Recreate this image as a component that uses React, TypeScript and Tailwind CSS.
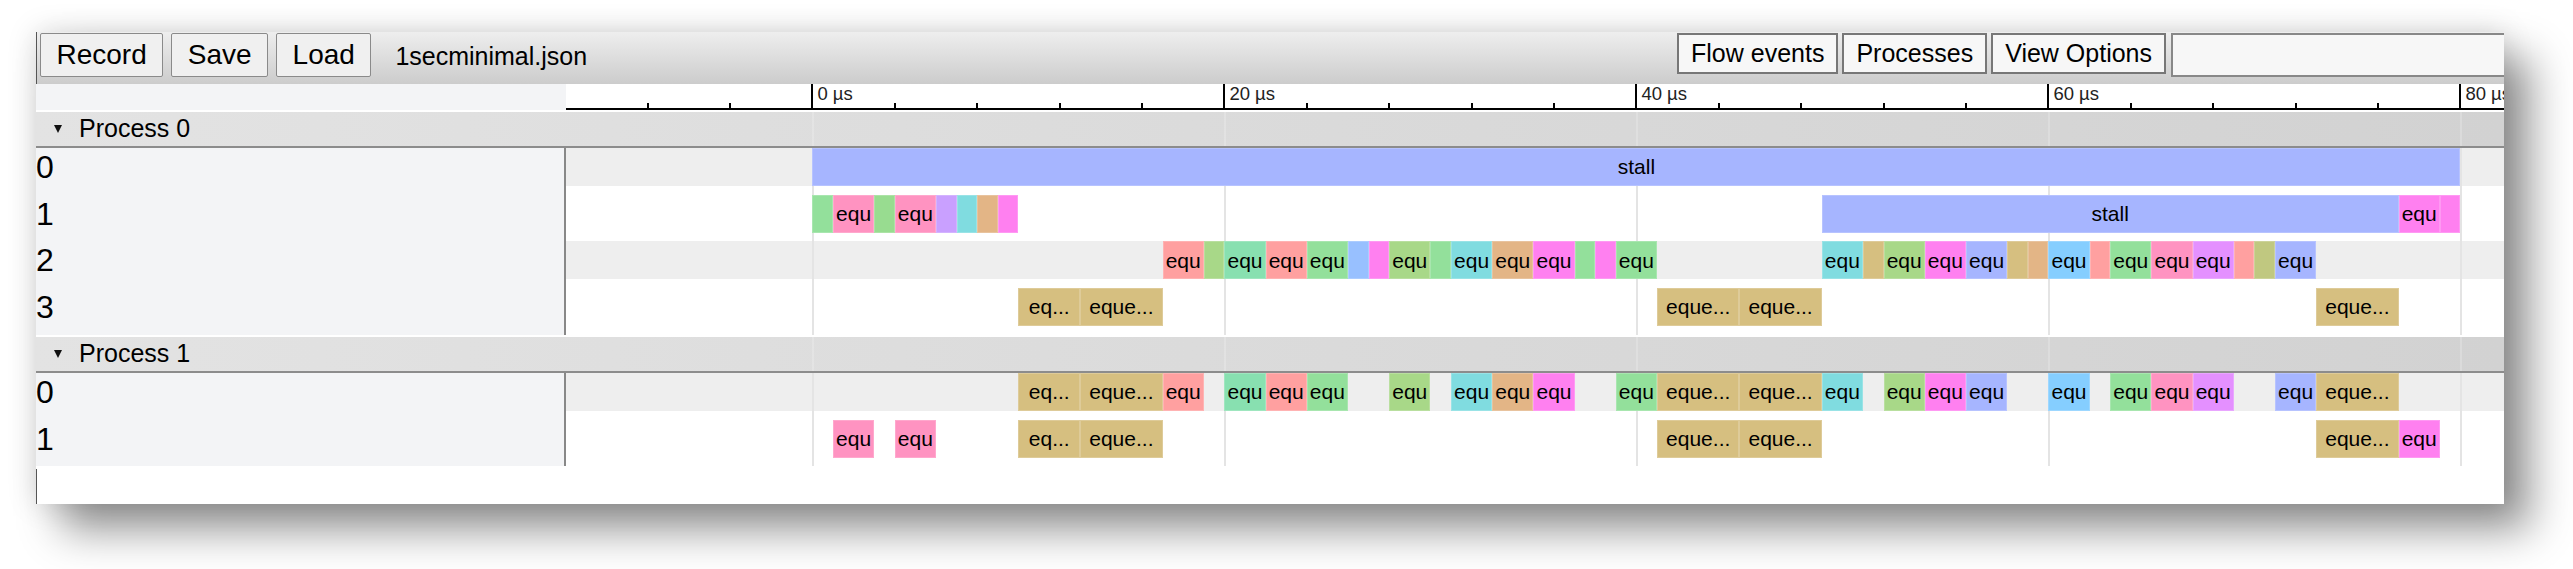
const PX_PER_US = 20.6;
const ZERO_X = 246.4;
const LABEL_W = 530;

const c = {
  green: "bg-[#93e09b]",
  leaf: "bg-[#98dc90]",
  lime: "bg-[#a8d888]",
  sea: "bg-[#88e0b0]",
  pink: "bg-[#ff93c1]",
  purple: "bg-[#c9a0ff]",
  violet: "bg-[#e490ff]",
  teal: "bg-[#80dce0]",
  tan: "bg-[#e3b586]",
  gold: "bg-[#d6bf80]",
  magenta: "bg-[#ff80f0]",
  salmon: "bg-[#ffa0a0]",
  blue: "bg-[#98c0ff]",
  sky: "bg-[#85ceff]",
  peri: "bg-[#a6b5ff]",
  olive: "bg-[#c0c880]",
};

type Ev = [number, number, string, string?];

const eq3: Ev = [10, 13, c.gold, "eq..."];
const eq4: Ev = [13, 17, c.gold, "eque..."];
const eq41: Ev = [41, 45, c.gold, "eque..."];
const eq45: Ev = [45, 49, c.gold, "eque..."];
const eq73: Ev = [73, 77, c.gold, "eque..."];

const process0: Ev[][] = [
  [[0, 80, c.peri, "stall"]],
  [
    [0, 1, c.green],
    [1, 3, c.pink, "equ"],
    [3, 4, c.leaf],
    [4, 6, c.pink, "equ"],
    [6, 7, c.purple],
    [7, 8, c.teal],
    [8, 9, c.tan],
    [9, 10, c.magenta],
    [49, 77, c.peri, "stall"],
    [77, 79, c.magenta, "equ"],
    [79, 80, c.magenta],
  ],
  [
    [17, 19, c.salmon, "equ"],
    [19, 20, c.lime],
    [20, 22, c.sea, "equ"],
    [22, 24, c.salmon, "equ"],
    [24, 26, c.green, "equ"],
    [26, 27, c.blue],
    [27, 28, c.magenta],
    [28, 30, c.lime, "equ"],
    [30, 31, c.green],
    [31, 33, c.teal, "equ"],
    [33, 35, c.tan, "equ"],
    [35, 37, c.magenta, "equ"],
    [37, 38, c.green],
    [38, 39, c.magenta],
    [39, 41, c.green, "equ"],
    [49, 51, c.teal, "equ"],
    [51, 52, c.gold],
    [52, 54, c.lime, "equ"],
    [54, 56, c.magenta, "equ"],
    [56, 58, c.peri, "equ"],
    [58, 59, c.gold],
    [59, 60, c.tan],
    [60, 62, c.sky, "equ"],
    [62, 63, c.salmon],
    [63, 65, c.green, "equ"],
    [65, 67, c.pink, "equ"],
    [67, 69, c.violet, "equ"],
    [69, 70, c.salmon],
    [70, 71, c.olive],
    [71, 73, c.peri, "equ"],
  ],
  [eq3, eq4, eq41, eq45, eq73],
];

const process1: Ev[][] = [
  [
    eq3,
    eq4,
    [17, 19, c.salmon, "equ"],
    [20, 22, c.sea, "equ"],
    [22, 24, c.salmon, "equ"],
    [24, 26, c.green, "equ"],
    [28, 30, c.lime, "equ"],
    [31, 33, c.teal, "equ"],
    [33, 35, c.tan, "equ"],
    [35, 37, c.magenta, "equ"],
    [39, 41, c.green, "equ"],
    eq41,
    eq45,
    [49, 51, c.teal, "equ"],
    [52, 54, c.lime, "equ"],
    [54, 56, c.magenta, "equ"],
    [56, 58, c.peri, "equ"],
    [60, 62, c.sky, "equ"],
    [63, 65, c.green, "equ"],
    [65, 67, c.pink, "equ"],
    [67, 69, c.violet, "equ"],
    [71, 73, c.peri, "equ"],
    eq73,
  ],
  [
    [1, 3, c.pink, "equ"],
    [4, 6, c.pink, "equ"],
    eq3,
    eq4,
    eq41,
    eq45,
    eq73,
    [77, 79, c.magenta, "equ"],
  ],
];

const timeX = (t: number) => ZERO_X + t * PX_PER_US;

function GridLines({ className, offset = 0 }: { className: string; offset?: number }) {
  return (
    <>
      {[0, 20, 40, 60, 80].map((t) => (
        <div
          key={t}
          className={`absolute top-0 bottom-0 w-[2px] ${className}`}
          style={{ left: timeX(t) + offset }}
        />
      ))}
    </>
  );
}

function Button({ label, right }: { label: string; right?: boolean }) {
  return (
    <button
      className={
        right
          ? "h-[41px] px-[12px] bg-[#f7f7f7] border-2 border-[#777777] text-[25px] leading-none text-black"
          : "h-[44px] px-[15.5px] bg-[#f0f0f0] border border-[#8a8a8a] rounded-[2px] text-[28px] leading-none text-black"
      }
    >
      {label}
    </button>
  );
}

function Ruler() {
  const minor: number[] = [];
  for (let t = -12; t <= 92; t += 4) if (t % 20 !== 0) minor.push(t);
  return (
    <div className="flex h-[25.5px] mb-[2.5px]">
      <div className="w-[530px] shrink-0 bg-[#f3f4f6]" />
      <div className="relative flex-1 border-b-2 border-black overflow-hidden">
        {minor.map((t) => (
          <div
            key={t}
            className="absolute bottom-0 h-[5px] w-[2px] bg-black"
            style={{ left: timeX(t) - 1 }}
          />
        ))}
        {[0, 20, 40, 60, 80].map((t) => (
          <div
            key={t}
            className="absolute top-0 bottom-0 border-l-2 border-black pl-[4px] text-[18.5px] leading-[19px] whitespace-nowrap text-[#222222]"
            style={{ left: timeX(t) - 1 }}
          >
            {t} µs
          </div>
        ))}
      </div>
    </div>
  );
}

function Track({ events, shaded, label }: { events: Ev[]; shaded: boolean; label: number }) {
  return (
    <div className="flex h-[46.67px]">
      <div className="w-[530px] shrink-0 bg-[#f3f4f6] border-r-2 border-[#888888] text-[32px] leading-[38px] text-black">
        {label}
      </div>
      <div className="relative flex-1">
        {shaded && <div className="h-[38px] bg-[#eeeeee]" />}
        <GridLines className="bg-[#e4e4e4]" />
        {events.map(([start, end, color, text]) => (
          <div
            key={start}
            className={`absolute top-0 h-[38px] flex items-center justify-center text-[21px] whitespace-nowrap text-black border border-white/20 ${color}`}
            style={{ left: timeX(start), width: (end - start) * PX_PER_US }}
          >
            {text}
          </div>
        ))}
      </div>
    </div>
  );
}

function ProcessGroup({ name, rows }: { name: string; rows: Ev[][] }) {
  return (
    <div className="mb-[2.33px]">
      <div className="relative flex items-center h-9 pl-[18px] gap-[17px] border-b-2 border-[#8c8c8c] bg-linear-to-r from-[#e3e3e3] to-[#d2d2d2] text-[25px] text-black">
        <GridLines className="bg-white/20" offset={LABEL_W} />
        <svg width="8" height="8" viewBox="0 0 8 8">
          <path d="M0 0 H8 L4 8 Z" fill="#111111" />
        </svg>
        {name}
      </div>
      {rows.map((events, i) => (
        <Track key={i} events={events} shaded={i % 2 === 0} label={i} />
      ))}
    </div>
  );
}

export default function App() {
  return (
    <div className="h-[569px] overflow-hidden bg-white pt-8 pl-9 font-['Liberation_Sans',Arial,sans-serif]">
      <div className="w-[2468px] h-[472px] bg-white overflow-hidden shadow-[26px_26px_40px_rgba(0,0,0,0.42),0_0_28px_rgba(0,0,0,0.15)]">
        <div className="flex h-[52px] pt-[1px] pl-[3px] bg-linear-to-b from-[#eeeeee] to-[#cccccc] border-l border-[#555555]">
          <div className="flex gap-2">
            <Button label="Record" />
            <Button label="Save" />
            <Button label="Load" />
          </div>
          <div className="ml-[24px] text-[25px] leading-[46px] text-black">1secminimal.json</div>
          <div className="ml-auto flex gap-[4px]">
            <Button label="Flow events" right />
            <Button label="Processes" right />
            <Button label="View Options" right />
            <input
              readOnly
              className="ml-[1px] w-[333px] h-[44px] bg-[#f7f7f7] border-y-2 border-l-2 border-[#888888]"
            />
          </div>
        </div>
        <Ruler />
        <ProcessGroup name="Process 0" rows={process0} />
        <ProcessGroup name="Process 1" rows={process1} />
        <div className="h-[36px] border-l border-[#555555]" />
      </div>
    </div>
  );
}
